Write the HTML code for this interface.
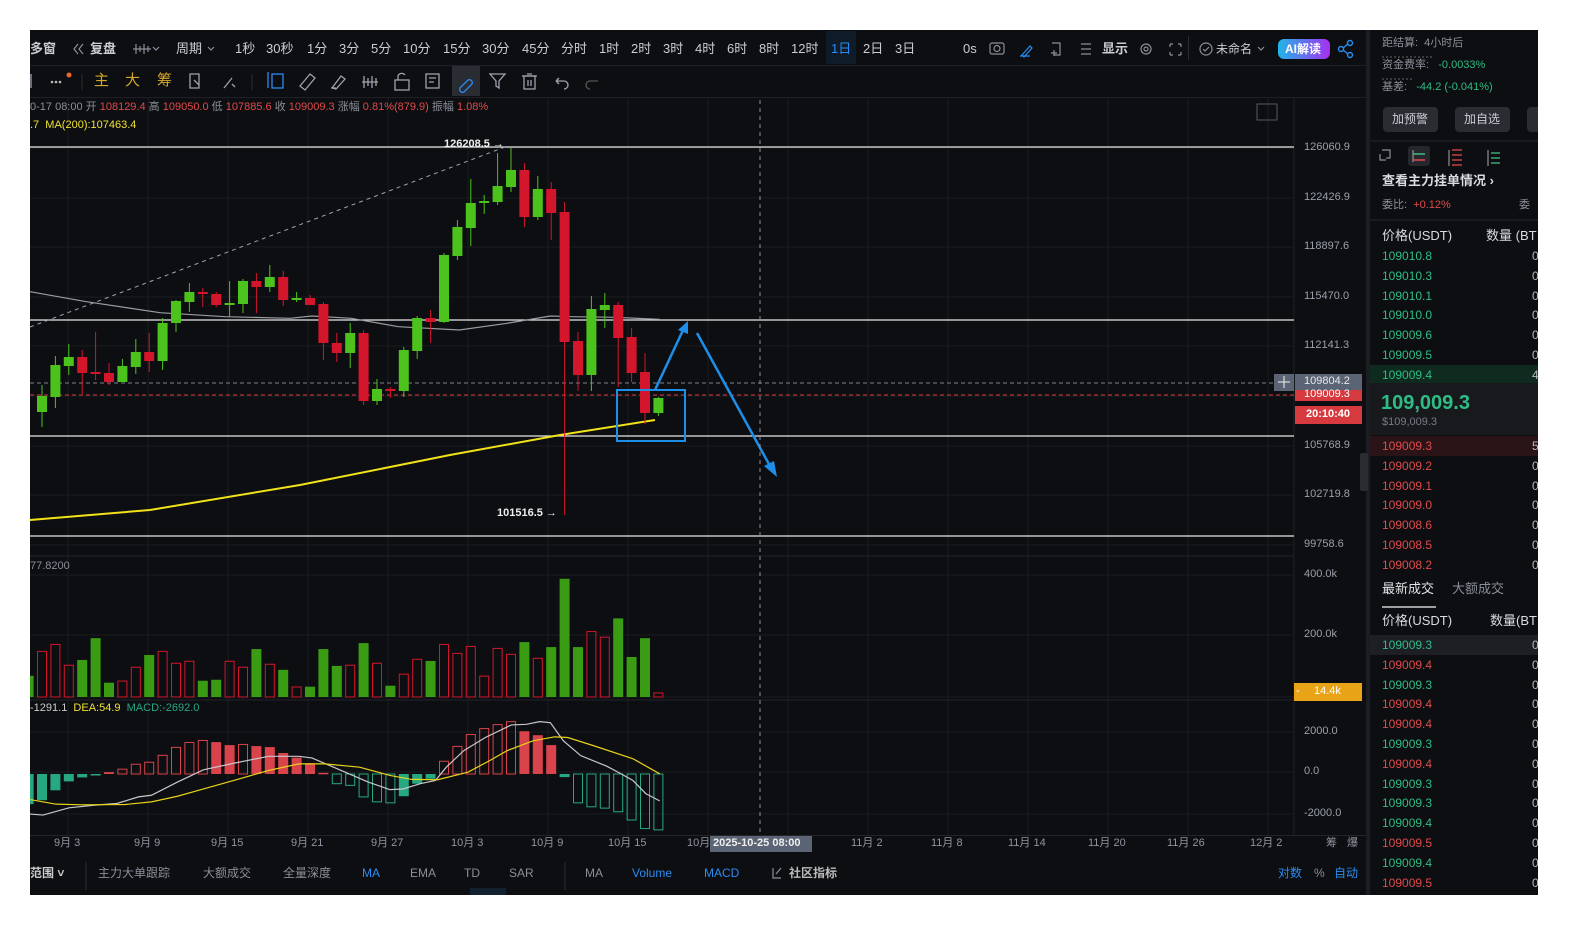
<!DOCTYPE html>
<html style="overflow:hidden"><head><meta charset="utf-8">
<style>
*{margin:0;padding:0;box-sizing:border-box}
html,body{width:1581px;height:933px;overflow:hidden}
body{background:#fff;font-family:"Liberation Sans","Noto Sans CJK SC",sans-serif;position:relative}
#wrap{position:absolute;left:0;top:0;width:1581px;height:933px;overflow:hidden}
#app{position:absolute;left:30px;top:30px;width:1508px;height:865px;background:#0d0e11;overflow:hidden}
.t{position:absolute;white-space:nowrap;line-height:1}
#svg{position:absolute;left:0;top:0}
#txt{position:absolute;left:0;top:0;width:1581px;height:933px}
.w{position:absolute;background:#fff}
</style></head><body>
<div id="wrap">
<div id="app"></div>
<svg id="svg" width="1581" height="933" xmlns="http://www.w3.org/2000/svg"></svg>
<div id="txt"></div>
<div class="w" style="left:1538px;top:0;width:43px;height:933px"></div>
<div class="w" style="left:0;top:895px;width:1581px;height:38px"></div>
<div class="w" style="left:0;top:0;width:30px;height:933px"></div>
<div class="w" style="left:0;top:0;width:1581px;height:30px"></div>
</div>
<script>
var S=[];
function R(x,y,w,h,f,extra){S.push('<rect x="'+x+'" y="'+y+'" width="'+w+'" height="'+h+'" fill="'+f+'" '+(extra||'')+'/>');}
function L(x1,y1,x2,y2,c,w,extra){S.push('<line x1="'+x1+'" y1="'+y1+'" x2="'+x2+'" y2="'+y2+'" stroke="'+c+'" stroke-width="'+(w||1)+'" '+(extra||'')+'/>');}
function P(pts,c,w,extra){S.push('<polyline fill="none" points="'+pts.map(function(p){return p[0]+','+p[1]}).join(' ')+'" stroke="'+c+'" stroke-width="'+(w||1)+'" '+(extra||'')+'/>');}
var T=[];
function X(x,y,s,c,fs,extra){T.push('<div class="t" style="left:'+x+'px;top:'+y+'px;color:'+c+';font-size:'+(fs||12)+'px;'+(extra||'')+'">'+s+'</div>');}

R(1366,30,4,865,'#1c1d22');
R(30,65,1336,1,'#1e2025');
R(30,97,1336,1,'#1e2025');
R(30,835,1336,1,'#22242a');
R(30,857,1336,1,'#22242a');
R(30,857,1336,38,'#0d0e11');
R(826,31,30,33,'#0f1b29');
R(452,66,28,30,'#2a2c33');
R(1188,36,1,24,'#2a2c31');
var gx=[68,148,228,308,388,468,548,628,708,788,868,948,1028,1108,1188,1268];
gx.forEach(function(x){L(x,98,x,835,'#1a1c20');});
[148,198,247,297,346,396,446,495,545,575,635,697,732,772,814].forEach(function(y){L(30,y,1294,y,'#1a1c20');});
L(30,556,1294,556,'#22242a');L(30,700,1294,700,'#22242a');
R(1294,98,72,737,'#0d0e11');
L(1294,98,1294,835,'#1e2025');
var C=[[396,412,385,427,'G'],[365,397,356,408,'G'],[357,366,344,375,'G'],[357,373,350,394,'R'],[372,374,332,380,'R'],[373,382,363,385,'R'],[366,382,359,382,'G'],[352,367,339,374,'G'],[352,361,333,372,'R'],[323,361,318,370,'G'],[301,323,300,332,'G'],[292,302,283,312,'G'],[292,294,288,307,'R'],[294,305,292,307,'R'],[303,305,281,317,'G'],[281,304,279,313,'G'],[281,287,273,313,'R'],[277,287,265,292,'G'],[277,300,271,306,'R'],[298,300,292,302,'G'],[298,305,295,305,'R'],[304,343,302,360,'R'],[343,353,333,362,'R'],[333,353,323,368,'G'],[333,401,330,405,'R'],[389,401,379,405,'G'],[389,391,387,398,'R'],[350,391,347,397,'G'],[318,351,316,359,'G'],[318,322,310,343,'R'],[255,322,253,323,'G'],[227,256,220,260,'G'],[203,228,179,246,'G'],[201,203,195,214,'G'],[186,202,153,205,'G'],[170,187,148,192,'G'],[170,217,163,227,'R'],[189,217,176,220,'G'],[189,213,182,240,'R'],[212,342,202,515,'R'],[341,375,332,391,'R'],[309,375,296,391,'G'],[305,310,293,328,'G'],[305,338,302,387,'R'],[337,373,328,382,'R'],[372,413,353,424,'R'],[398,413,397,416,'G']];
function cx(i){return 42+i*13.4;}
[147,320,436,536].forEach(function(y){L(30,y,1294,y,'#e8e8e8',1.2);});
L(30,383,1294,383,'#7d818a',1,'stroke-dasharray="4,3"');
L(30,395,1294,395,'#e0383f',1,'stroke-dasharray="4,3"');
L(30,327,505,147,'#a0a3aa',1,'stroke-dasharray="4,4"');
var g=[[0,455],[130,485],[300,518],[450,530],[600,535],[650,528],[740,535],[850,560],[990,570],[1100,550],[1200,528],[1250,530],[1350,532],[1452,538]].map(function(p){return [30+p[0]/2.306,140+p[1]/3]});
P(g,'#9a9ca2',1.2);
P([[30,520],[150,510],[300,485],[450,455],[560,435],[655,420]],'#f2e21a',2);
C.forEach(function(c,i){var x=cx(i),col=c[4]=='G'?'#4cc21c':'#d4162c';L(x,c[2],x,c[3],col,1);R(x-5,c[0],10,Math.max(c[1]-c[0],1.5),col);});
var V=[[0,363,'G'],[28,289,'R'],[59,268,'R'],[90,331,'R'],[121,315,'G'],[152,249,'G'],[183,384,'G'],[214,379,'R'],[245,337,'R'],[276,300,'G'],[307,289,'R'],[338,325,'R'],[369,319,'R'],[399,378,'G'],[430,375,'G'],[461,319,'R'],[492,337,'R'],[523,282,'G'],[554,328,'R'],[585,345,'G'],[616,397,'R'],[647,396,'G'],[678,282,'G'],[709,333,'G'],[740,331,'R'],[771,264,'G'],[802,325,'R'],[833,393,'G'],[864,358,'R'],[895,313,'R'],[926,318,'G'],[957,268,'R'],[988,295,'R'],[1019,274,'R'],[1050,364,'R'],[1080,280,'R'],[1111,298,'R'],[1142,261,'G'],[1173,310,'R'],[1204,276,'G'],[1236,69,'G'],[1266,276,'G'],[1297,229,'R'],[1328,246,'R'],[1359,189,'G'],[1390,306,'G'],[1421,249,'G'],[1452,415,'R']];
V.forEach(function(v,i){var x=cx(i-1),t=556+v[1]*0.33;if(v[2]=='G')R(x-5,t,10,697-t,'#3a9c13');else R(x-4.5,t,9,697-t,'none','stroke="#d4162c" stroke-width="1"');});
var M=[752,740,710,683,671,662,655,646,631,625,604,580,565,559,564,573,571,576,579,597,611,628,657,690,695,730,745,748,728,690,675,622,577,541,523,511,502,531,543,573,670,748,760,764,775,800,826,830];
M.forEach(function(z,i){var x=cx(i-1),y=556+z*0.33,y0=774;var prev=i>0?Math.abs(M[i-1]-660):0,cur=Math.abs(z-660);var red=z<660;var grow=cur>=prev;var col=red?'#d9434b':'#26a981';var top=Math.min(y,y0),h=Math.max(Math.abs(y-y0),1.5);
 if(grow&&i>0&&!(red&&i==6))R(x-4.5,top,9,h,'none','stroke="'+col+'" stroke-width="1"');else R(x-5,top,10,h,col);});
var W=[[0,782],[30,785],[90,763],[150,755],[200,750],[250,730],[280,725],[340,685],[400,648],[470,628],[550,607],[620,607],[650,612],[700,640],[780,685],[830,708],[860,706],[900,690],[935,680],[960,640],[1000,590],[1050,550],[1110,512],[1145,510],[1175,502],[1200,505],[1230,560],[1270,605],[1330,637],[1360,658],[1390,680],[1420,720],[1452,742]].map(function(p){return[30+p[0]/2.306,556+p[1]*0.33]});
var Y=[[0,738],[60,752],[120,754],[220,753],[280,745],[340,728],[400,706],[470,680],[550,650],[620,630],[680,630],[760,640],[830,665],[880,677],[940,678],[1010,655],[1060,620],[1100,590],[1160,560],[1210,548],[1240,550],[1300,575],[1390,614],[1452,660]].map(function(p){return[30+p[0]/2.306,556+p[1]*0.33]});
P(W,'#c8c8cc',1.2);P(Y,'#e8d21a',1.2);
R(617,390,68,51,'none','stroke="#1e8fe8" stroke-width="2"');
L(655,390,684,328,'#1e8fe8',2.5);S.push('<polygon points="688,321 678,330 688,334" fill="#1e8fe8"/>');
L(697,333,770,466,'#1e8fe8',2.5);S.push('<polygon points="777,477 764,466 774,461" fill="#1e8fe8"/>');
L(760,100,760,835,'#8a8d94',1,'stroke-dasharray="4,4"');
R(1274,374,20,17,'#5a6475');L(1278,382,1290,382,'#ddd',1.2);L(1284,376,1284,388,'#ddd',1.2);
R(1295,374,67,17,'#5a6475');R(1295,390,67,11,'#d63a3f');R(1295,406,67,18,'#d63a3f');
R(1294,683,68,18,'#e8a317');
R(710,836,102,16,'#5a6475');
R(1257,104,20,16,'none','stroke="#555a63" stroke-width="1"');
S.push('<defs><linearGradient id="ai" x1="0" x2="1"><stop offset="0" stop-color="#21b5e8"/><stop offset="1" stop-color="#a630f0"/></linearGradient></defs>');
R(1278,39,52,20,'url(#ai)','rx="6"');
S.push('<g stroke="#2a8cf0" stroke-width="1.4" fill="none"><circle cx="1350" cy="43" r="2.5"/><circle cx="1341" cy="49" r="2.5"/><circle cx="1350" cy="55" r="2.5"/><line x1="1343" y1="48" x2="1348" y2="44"/><line x1="1343" y1="50" x2="1348" y2="54"/></g>');
R(1383,107,55,25,'#2a2c31','rx="4"');R(1455,107,55,25,'#2a2c31','rx="4"');R(1527,107,20,25,'#2a2c31','rx="4"');
L(1370,141,1538,141,'#24262b');L(1370,220,1538,220,'#24262b');
R(1408,146,22,20,'#25272c','rx="3"');
L(1382,57,1432,57,'#666',1,'stroke-dasharray="2,2"');L(1382,79,1412,79,'#666',1,'stroke-dasharray="2,2"');
R(1370,365,168,20,'#0f2a1e');
R(1370,383,168,52,'#17191d');
R(1370,436,168,20,'#2a1417');
R(1370,635,168,20,'#1d1f24');
L(1382,607,1436,607,'#d0d0d0',1.5);
R(1360,453,8,38,'#2a2c31','rx="2"');
S.push('<g stroke="#9ea3ad" stroke-width="1.3" fill="none">'+
'<rect x="272" y="74" width="11" height="14" stroke="#2a8cf0"/><path d="M268 72v16" stroke="#2a8cf0"/>'+
'<path d="M300 86l10-12 5 4-10 12z"/><path d="M332 88l9-12 4 3-9 10z M331 88h5"/>'+
'<path d="M364 76v12 M368 78v8 M372 76v12 M376 78v8 M362 82h16"/>'+
'<rect x="395" y="80" width="14" height="10"/><path d="M398 80v-4a4 4 0 0 1 7-1"/>'+
'<rect x="426" y="74" width="13" height="14"/><path d="M429 78h7 M429 82h5"/>'+
'<path d="M460 88l8-8a3 3 0 0 1 4 4l-8 8a3 3 0 0 1-4-4z" stroke="#2a8cf0"/>'+
'<path d="M490 74h15l-6 7v7l-3-2v-5z"/><rect x="524" y="76" width="11" height="13"/><path d="M522 76h15 M527 74h5 M528 80v6 M531 80v6"/>'+
'<path d="M556 81h8a4 4 0 0 1 0 8 M556 81l3-3 M556 81l3 3"/><path d="M598 81h-8a4 4 0 0 0 0 8" stroke="#555"/>'+
'<path d="M190 74h9v14h-9z M194 80l5 5"/><path d="M224 88l8-10 M232 84l3 3" />'+
'<path d="M31 74v14"/></g>');
S.push('<circle cx="52" cy="82" r="1.3" fill="#bbb"/><circle cx="56" cy="82" r="1.3" fill="#bbb"/><circle cx="60" cy="82" r="1.3" fill="#bbb"/><circle cx="69" cy="75" r="2.5" fill="#f0642a"/>');
L(82,74,82,90,'#2a2c31');L(252,74,252,90,'#2a2c31');
S.push('<g stroke="#8a8f99" stroke-width="1.2" fill="none"><rect x="990" y="43" width="14" height="11" rx="2"/><circle cx="997" cy="48.5" r="3"/>'+
'<path d="M1022 55l8-9 2 2-8 9z M1020 56h10" stroke="#2a8cf0"/><path d="M1052 43h8v12h-6 M1054 50v6 M1051 53h6"/><path d="M1081 44h10 M1081 49h10 M1081 54h10"/>'+
'<circle cx="1146" cy="49" r="5"/><circle cx="1146" cy="49" r="2"/><path d="M1170 44h3 M1170 44v3 M1181 44h-3 M1181 44v3 M1170 55h3 M1170 55v-3 M1181 55h-3 M1181 55v-3"/>'+
'<circle cx="1206" cy="49" r="6"/><path d="M1203 49l2 2 4-4"/><path d="M136 44v10 M140 46v6 M144 44v10 M148 46v6 M133 49h18"/><path d="M153 47l3 3 3-3 M208 47l3 3 3-3 M1258 47l3 3 3-3"/><path d="M78 44l-4 5 4 5 M83 44l-4 5 4 5"/>'+
'<path d="M1382 150h8v8h-4 M1380 154v6h6"/>'+
'<path d="M773 868v10h8 M776 874l5-6"/></g>');
L(1413,150,1413,162,'#aaa');L(1413,154,1425,154,'#3fbe80',1.5);L(1413,160,1425,160,'#e04a4a',1.5);
L(1449,150,1449,166,'#aaa');L(1452,150,1462,150,'#e04a4a',1.3);L(1452,155,1462,155,'#e04a4a',1.3);L(1452,160,1462,160,'#e04a4a',1.3);L(1452,165,1462,165,'#e04a4a',1.3);
L(1488,150,1488,166,'#aaa');L(1491,153,1500,153,'#3fbe80',1.3);L(1491,158,1500,158,'#3fbe80',1.3);L(1491,163,1500,163,'#3fbe80',1.3);
L(565,862,565,890,'#2a2c31');L(86,862,86,890,'#2a2c31');
R(470,888,36,7,'#13202f');
document.getElementById('svg').innerHTML=S.join('');

var tc='#c9cdd4';
X(30,42,'多窗',tc,13,'font-weight:bold');X(90,42,'复盘',tc,13,'font-weight:bold');X(176,42,'周期',tc,13);
[['1秒',235],['30秒',266],['1分',307],['3分',339],['5分',371],['10分',403],['15分',443],['30分',482],['45分',522],['分时',561],['1时',599],['2时',631],['3时',663],['4时',695],['6时',727],['8时',759],['12时',791],['2日',863],['3日',895]].forEach(function(a){X(a[1],42,a[0],tc,13);});
X(831,42,'1日','#2a8cf0',13);X(963,42,'0s',tc,13);X(1102,42,'显示',tc,13,'font-weight:bold');X(1216,43,'未命名',tc,12);
X(1285,43,'AI解读','#fff',12,'font-weight:bold');
X(94,73,'主','#d4a72c',15);X(125,73,'大','#d4a72c',15);X(157,73,'筹','#d4a72c',15);
var gr='#8a8f99',rd='#e04a4a';
X(30,102,'0-17 08:00 开 <span style="color:#e04a4a">108129.4</span> 高 <span style="color:#e04a4a">109050.0</span> 低 <span style="color:#e04a4a">107885.6</span> 收 <span style="color:#e04a4a">109009.3</span> 涨幅 <span style="color:#e04a4a">0.81%(879.9)</span> 振幅 <span style="color:#e04a4a">1.08%</span>',gr,11);
X(30,120,'.7 &nbsp;<span style="color:#f0e130">MA(200):107463.4</span>','#f0e130',11);
X(444,139,'126208.5 →','#eee',11,'font-weight:bold');X(497,508,'101516.5 →','#eee',11,'font-weight:bold');
[['126060.9',142],['122426.9',192],['118897.6',241],['115470.0',291],['112141.3',340],['105768.9',440],['102719.8',489],['99758.6',539],['400.0k',569],['200.0k',629],['2000.0',726],['0.0',766],['-2000.0',808]].forEach(function(a){X(1304,a[1],a[0],'#9aa0aa',11);});
X(1304,376,'109804.2','#e8e8e8',11);X(1304,389,'109009.3','#fff',11);X(1306,409,'20:10:40','#fff',11,'font-weight:bold');X(1314,686,'14.4k','#fff',11);X(1296,686,'-','#fff',11);
X(30,561,'77.8200',gr,11);
X(30,703,'-1291.1 &nbsp;<span style="color:#f0e130">DEA:54.9</span> &nbsp;<span style="color:#26a981">MACD:-2692.0</span>','#ccc',11);
[['9月 3',54],['9月 9',134],['9月 15',211],['9月 21',291],['9月 27',371],['10月 3',451],['10月 9',531],['10月 15',608],['10月',687],['11月 2',851],['11月 8',931],['11月 14',1008],['11月 20',1088],['11月 26',1167],['12月 2',1250],['筹',1326],['爆',1347]].forEach(function(a){X(a[1],838,a[0],'#8f95a0',11);});
X(713,838,'2025-10-25 08:00','#eee',11,'font-weight:bold');
X(30,867,'范围 ˅','#ccc',12,'font-weight:bold');
[['主力大单跟踪',98,gr],['大额成交',203,gr],['全量深度',283,gr],['MA',362,'#2a8cf0'],['EMA',410,gr],['TD',464,gr],['SAR',509,gr],['MA',585,gr],['Volume',632,'#2a8cf0'],['MACD',704,'#2a8cf0'],['社区指标',789,'#bbb'],['对数',1278,'#2a8cf0'],['%',1314,gr],['自动',1334,'#2a8cf0']].forEach(function(a){X(a[1],867,a[0],a[2],12,a[0]=='社区指标'?'font-weight:bold':'');});
X(1382,38,'距结算: &nbsp;4小时后','#8a8f99',11);
X(1382,60,'资金费率: &nbsp;&nbsp;<span style="color:#2ebd85">-0.0033%</span>','#8a8f99',11);
X(1382,82,'基差: &nbsp;&nbsp;<span style="color:#2ebd85">-44.2 (-0.041%)</span>','#8a8f99',11);
X(1392,113,'加预警','#c9cdd4',12);X(1464,113,'加自选','#c9cdd4',12);
X(1382,174,'查看主力挂单情况 ›','#d8dbe0',13,'font-weight:bold');
X(1382,200,'委比: &nbsp;<span style="color:#e04a4a">+0.12%</span>','#8a8f99',11);X(1519,200,'委','#8a8f99',11);
X(1382,229,'价格(USDT)','#d8dbe0',13);X(1486,229,'数量 (BT','#d8dbe0',13);
var g2='#2ebd85';
['109010.8','109010.3','109010.1','109010.0','109009.6','109009.5','109009.4'].forEach(function(s,i){X(1382,250+i*19.8,s,g2,12);X(1532,250+i*19.8,i==6?'4':'0','#bbb',12);});
X(1381,393,'109,009.3',g2,20,'font-weight:bold');X(1382,417,'$109,009.3','#777c86',11);
['109009.3','109009.2','109009.1','109009.0','109008.6','109008.5','109008.2'].forEach(function(s,i){X(1382,440+i*19.8,s,rd,12);X(1532,440+i*19.8,i==0?'5':'0','#bbb',12);});
X(1382,582,'最新成交','#e0e2e6',13);X(1452,582,'大额成交','#8a8f99',13);
X(1382,614,'价格(USDT)','#d8dbe0',13);X(1490,614,'数量(BT','#d8dbe0',13);
[['109009.3','g'],['109009.4','r'],['109009.3','g'],['109009.4','r'],['109009.4','r'],['109009.3','g'],['109009.4','r'],['109009.3','g'],['109009.3','g'],['109009.4','g'],['109009.5','r'],['109009.4','g'],['109009.5','r']].forEach(function(a,i){X(1382,639+i*19.8,a[0],a[1]=='g'?g2:rd,12);X(1532,639+i*19.8,'0','#bbb',12);});
document.getElementById('txt').innerHTML=T.join('');
</script>
</body></html>
